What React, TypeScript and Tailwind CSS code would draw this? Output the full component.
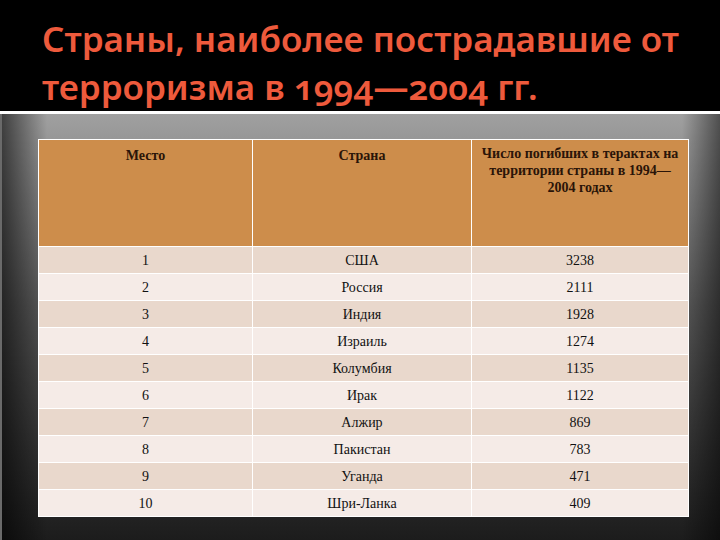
const rows = [
  ["1", "США", "3238"],
  ["2", "Россия", "2111"],
  ["3", "Индия", "1928"],
  ["4", "Израиль", "1274"],
  ["5", "Колумбия", "1135"],
  ["6", "Ирак", "1122"],
  ["7", "Алжир", "869"],
  ["8", "Пакистан", "783"],
  ["9", "Уганда", "471"],
  ["10", "Шри-Ланка", "409"],
];

export default function App() {
  return (
    <div className="w-[720px] h-[540px] bg-black flex flex-col overflow-hidden">
      <div className="h-[111px] pl-[42px] pt-[15px]">
        <h1 className="font-['Noto_Sans',sans-serif] font-semibold text-[35px] leading-[48px] text-[#ee5a3c] tracking-[0px] [text-shadow:2px_2px_2px_rgba(0,0,0,0.9)] [font-feature-settings:'onum'] whitespace-nowrap">
          Страны, наиболее пострадавшие от
          <br />
          терроризма в 1994—2004 гг.
        </h1>
      </div>
      <div className="h-[3px] bg-white" />
      <div className="flex-1 pt-[25px] pl-[36px] border-l-2 border-[#6a6a6a] bg-[linear-gradient(to_right,rgba(0,0,0,0.6),rgba(0,0,0,0)_45px,rgba(0,0,0,0)_680px,rgba(0,0,0,0.5)),linear-gradient(to_bottom,#a0a0a0,#5a5a5a_45%,#1c1c1c)]">
        <table className="w-[651px] border-collapse font-['Liberation_Serif',serif] text-[14px] text-[#111]">
          <thead>
            <tr className="bg-[#cd8d4b] h-[107px] align-top">
              <th className="w-[214px] border border-white pt-[5px] font-bold text-[#2a1408]">Место</th>
              <th className="w-[219px] border border-white pt-[5px] font-bold text-[#2a1408]">Страна</th>
              <th className="border border-white pt-[5px] px-[8px] font-bold text-[#2a1408] leading-[17px]">
                Число погибших в терактах на территории страны в 1994— 2004 годах
              </th>
            </tr>
          </thead>
          <tbody>
            {rows.map((r, i) => (
              <tr key={i} className={i % 2 === 0 ? "bg-[#e9d8cc] h-[27px]" : "bg-[#f5ebe7] h-[27px]"}>
                {r.map((c, j) => (
                  <td key={j} className="border border-white text-center align-middle">
                    {c}
                  </td>
                ))}
              </tr>
            ))}
          </tbody>
        </table>
      </div>
    </div>
  );
}
